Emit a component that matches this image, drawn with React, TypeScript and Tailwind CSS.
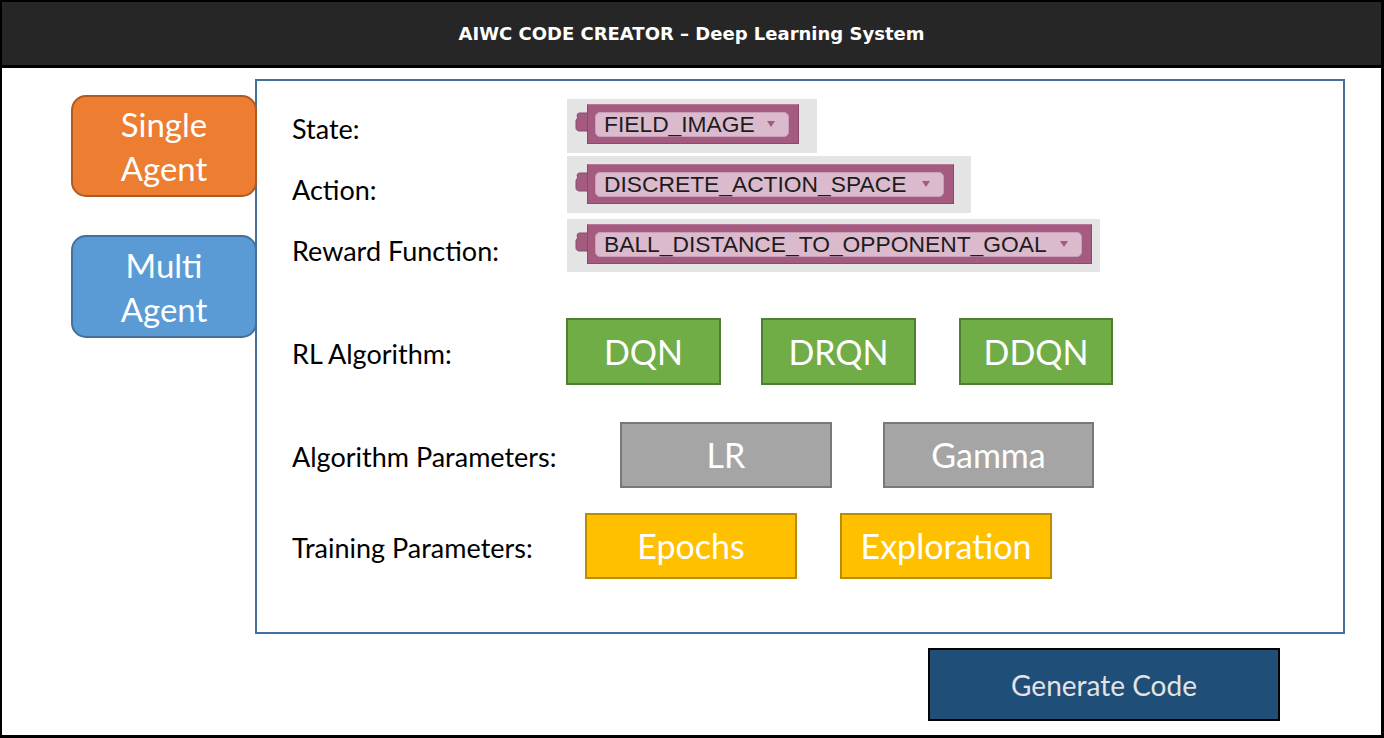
import React from "react";

function Tab() {
  return (
    <svg width="13" height="20" viewBox="0 0 13 20" className="shrink-0 mt-[8px]">
      <path
        d="M13 1 L5 1 C2.5 1 1.5 2.5 2.5 5 C3 6.5 1 7 1 9 L1 16 C1 18 2.5 19 5 19 L13 19 Z"
        fill="#a55b80"
        stroke="#8b4a6b"
        strokeWidth="1"
      />
    </svg>
  );
}

function Block({ text, bodyW }: { text: string; bodyW: string }) {
  return (
    <div className="flex items-start">
      <Tab />
      <div
        className={`${bodyW} h-[40px] bg-[#a55b80] border border-[#8b4a6b] border-t-[#b8769a] flex items-center pl-[7px] pr-[9px] -ml-[1px]`}
      >
        <div className="flex-1 h-[25px] rounded-[5px] bg-[#dcbacd] border border-[#c9a0b8] flex items-center pl-[8px] pr-[13px]">
          <span className="font-['Liberation_Sans',Arial,sans-serif] text-[22.8px] leading-none text-[#1c1c1c] whitespace-nowrap">
            {text}
          </span>
          <span className="flex-1" />
          <svg width="8" height="6" viewBox="0 0 8 6">
            <path d="M0 0 L8 0 L4 6 Z" fill="#a55b80" />
          </svg>
        </div>
      </div>
    </div>
  );
}

function Btn({
  text,
  cls,
}: {
  text: string;
  cls: string;
}) {
  return (
    <div
      className={`${cls} border-2 flex items-center justify-center text-white font-['Lato',sans-serif] text-[34px] leading-none shrink-0`}
    >
      {text}
    </div>
  );
}

export default function App() {
  const label =
    "font-['Lato',sans-serif] text-[27px] leading-none text-black shrink-0 whitespace-nowrap";
  return (
    <div className="w-[1384px] h-[738px] bg-white border-black border-l-2 border-t-2 border-r-[3px] border-b-[3px] flex flex-col overflow-hidden">
      <div className="h-[66px] shrink-0 bg-[#262626] border-b-[3px] border-black flex items-center justify-center">
        <span className="font-['DejaVu_Sans',sans-serif] font-bold text-[18px] text-white">
          AIWC CODE CREATOR – Deep Learning System
        </span>
      </div>
      <div className="flex flex-1">
        <div className="w-[186px] ml-[69px] pt-[27px] flex flex-col gap-[38px] relative z-10 shrink-0">
          <div className="h-[102px] rounded-[15px] bg-[#ed7d31] border-2 border-[#ae5a21] flex flex-col items-center justify-center text-white font-['Lato',sans-serif] text-[33px] leading-[44px]">
            <span>Single</span>
            <span>Agent</span>
          </div>
          <div className="h-[103px] rounded-[15px] bg-[#5b9bd5] border-2 border-[#41719c] flex flex-col items-center justify-center text-white font-['Lato',sans-serif] text-[33px] leading-[44px]">
            <span>Multi</span>
            <span>Agent</span>
          </div>
        </div>
        <div className="flex flex-col -ml-[2px] mt-[11px]">
          <div className="w-[1090px] h-[555px] border-2 border-[#41719c] pl-[35px] pt-[18px] flex flex-col">
            <div className="flex items-center h-[54px]">
              <div className={`${label} w-[275px] pt-[5px]`}>State:</div>
              <div className="w-[250px] h-full bg-[#e4e4e4] pl-[8px] pt-[5px]">
                <Block text="FIELD_IMAGE" bodyW="w-[212px]" />
              </div>
            </div>
            <div className="flex items-center h-[57px] mt-[3px]">
              <div className={`${label} w-[275px] pt-[10px]`}>Action:</div>
              <div className="w-[404px] h-full bg-[#e4e4e4] pl-[8px] pt-[8px]">
                <Block text="DISCRETE_ACTION_SPACE" bodyW="w-[367px]" />
              </div>
            </div>
            <div className="flex items-center h-[53px] mt-[6px]">
              <div className={`${label} w-[275px] pt-[10px]`}>Reward Function:</div>
              <div className="w-[533px] h-full bg-[#e4e4e4] pl-[8px] pt-[5px]">
                <Block text="BALL_DISTANCE_TO_OPPONENT_GOAL" bodyW="w-[505px]" />
              </div>
            </div>
            <div className="flex items-center h-[67px] mt-[46px]">
              <div className={`${label} w-[274px] pt-[4px]`}>RL Algorithm:</div>
              <Btn text="DQN" cls="w-[155px] h-[67px] bg-[#70ad47] border-[#507e32]" />
              <Btn text="DRQN" cls="w-[155px] h-[67px] ml-[40px] bg-[#70ad47] border-[#507e32]" />
              <Btn text="DDQN" cls="w-[154px] h-[67px] ml-[43px] bg-[#70ad47] border-[#507e32]" />
            </div>
            <div className="flex items-center h-[66px] mt-[37px]">
              <div className={`${label} w-[328px] pt-[3px]`}>Algorithm Parameters:</div>
              <Btn text="LR" cls="w-[212px] h-[66px] bg-[#a5a5a5] border-[#787878]" />
              <Btn text="Gamma" cls="w-[211px] h-[66px] ml-[51px] bg-[#a5a5a5] border-[#787878]" />
            </div>
            <div className="flex items-center h-[66px] mt-[25px]">
              <div className={`${label} w-[293px] pt-[2px]`}>Training Parameters:</div>
              <Btn text="Epochs" cls="w-[212px] h-[66px] bg-[#ffc000] border-[#bc8c00]" />
              <Btn text="Exploration" cls="w-[212px] h-[66px] ml-[43px] bg-[#ffc000] border-[#bc8c00]" />
            </div>
          </div>
          <div className="flex justify-end pr-[65px] mt-[14px]">
            <div className="w-[352px] h-[73px] bg-[#1f4e79] border-2 border-black flex items-center justify-center text-[#e3e3e3] font-['Lato',sans-serif] text-[28px] leading-none">
              Generate Code
            </div>
          </div>
        </div>
      </div>
    </div>
  );
}
